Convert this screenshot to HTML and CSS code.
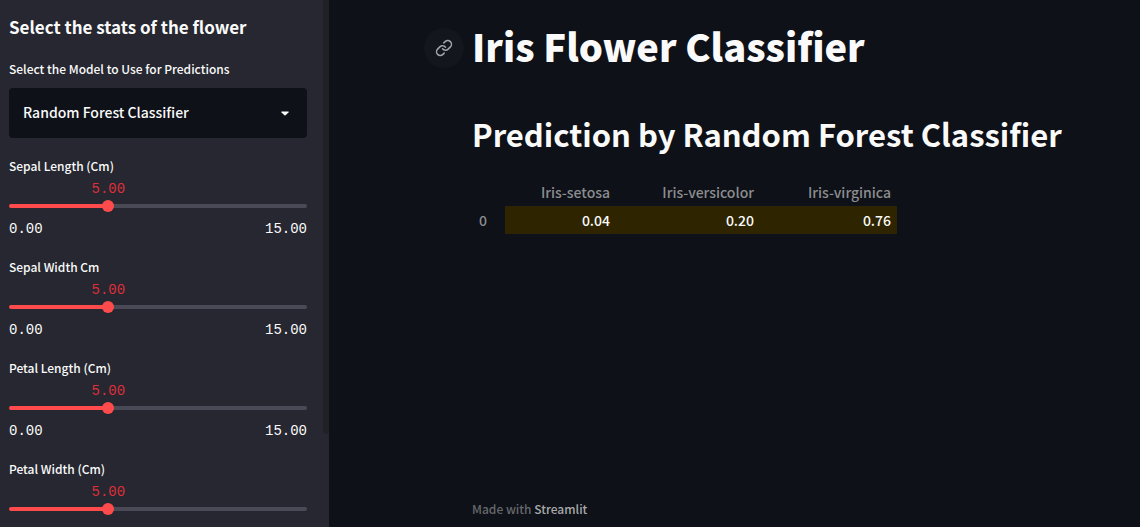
FILE: index.html
```
<!DOCTYPE html>
<html lang="en">
<head>
<meta charset="utf-8">
<meta name="viewport" content="width=device-width, initial-scale=1">
<title>Iris Flower Classifier</title>
<link rel="stylesheet" href="styles.css">
</head>
<body>
<div class="app">
  <aside class="sidebar">
    <h2 class="sidebar-title">Select the stats of the flower</h2>
    <div class="field">
      <label class="label" for="model">Select the Model to Use for Predictions</label>
      <div class="select-wrap">
        <select class="select" id="model">
          <option>Random Forest Classifier</option>
        </select>
        <svg class="caret" viewBox="0 0 8 5" aria-hidden="true"><path d="M0.6 0.5H7.4Q8 0.8 7.5 1.4L4.5 4.2Q4 4.6 3.5 4.2L0.5 1.4Q0 0.8 0.6 0.5Z"/></svg>
      </div>
    </div>
    <div class="slider">
      <label class="label" for="sepal-length">Sepal Length (Cm)</label>
      <output class="value" for="sepal-length">5.00</output>
      <div class="track"><input class="range" id="sepal-length" type="range" min="0" max="15" step="0.01" value="5"></div>
      <div class="limits"><span>0.00</span><span>15.00</span></div>
    </div>
    <div class="slider">
      <label class="label" for="sepal-width">Sepal Width Cm</label>
      <output class="value" for="sepal-width">5.00</output>
      <div class="track"><input class="range" id="sepal-width" type="range" min="0" max="15" step="0.01" value="5"></div>
      <div class="limits"><span>0.00</span><span>15.00</span></div>
    </div>
    <div class="slider">
      <label class="label" for="petal-length">Petal Length (Cm)</label>
      <output class="value" for="petal-length">5.00</output>
      <div class="track"><input class="range" id="petal-length" type="range" min="0" max="15" step="0.01" value="5"></div>
      <div class="limits"><span>0.00</span><span>15.00</span></div>
    </div>
    <div class="slider">
      <label class="label" for="petal-width">Petal Width (Cm)</label>
      <output class="value" for="petal-width">5.00</output>
      <div class="track"><input class="range" id="petal-width" type="range" min="0" max="15" step="0.01" value="5"></div>
    </div>
    <div class="scroll-thumb"></div>
  </aside>
  <main class="main">
    <div class="content">
      <div class="title-row">
        <a class="anchor" href="#iris-flower-classifier" aria-label="Link to this heading">
          <svg class="anchor-icon" viewBox="0 0 24 24" aria-hidden="true"><path d="M10 13a5 5 0 0 0 7.54.54l3-3a5 5 0 0 0-7.07-7.07l-1.72 1.71"/><path d="M14 11a5 5 0 0 0-7.54-.54l-3 3a5 5 0 0 0 7.07 7.07l1.71-1.71"/></svg>
        </a>
        <h1 class="title" id="iris-flower-classifier">Iris Flower Classifier</h1>
      </div>
      <h2 class="subtitle">Prediction by Random Forest Classifier</h2>
      <table class="table">
        <thead>
          <tr><th class="index"></th><th class="setosa" scope="col">Iris-setosa</th><th class="versicolor" scope="col">Iris-versicolor</th><th class="virginica" scope="col">Iris-virginica</th></tr>
        </thead>
        <tbody>
          <tr><th class="index" scope="row">0</th><td>0.04</td><td>0.20</td><td>0.76</td></tr>
        </tbody>
      </table>
    </div>
    <footer class="footer">Made with <a class="footer-link" href="#streamlit">Streamlit</a></footer>
  </main>
</div>
</body>
</html>
```
FILE: styles.css
```
* { box-sizing: border-box; }

body {
  margin: 0;
  background: #0e1117;
  color: #fafafa;
  font-family: "Noto Sans CJK SC", "Open Sans", sans-serif;
  font-size: 14px;
  font-weight: 500;
}

.app {
  display: flex;
  height: 100vh;
  overflow: hidden;
}

.sidebar {
  position: relative;
  flex: 0 0 329px;
  padding: 14px 22px 0 9px;
  overflow: hidden;
  background: #262730;
}

.sidebar-title {
  margin: 0 0 18px;
  font-size: 17px;
  line-height: 26px;
  font-weight: 700;
}

.label {
  display: block;
  font-size: 12px;
  line-height: 22px;
}

.field { margin-bottom: 17px; }

.select-wrap {
  position: relative;
  margin-top: 8px;
}

.select {
  display: block;
  width: 100%;
  height: 50px;
  padding: 0 40px 2px 14px;
  border: 0;
  border-radius: 4px;
  appearance: none;
  background: #0e1117;
  color: #fafafa;
  font-family: inherit;
  font-size: 14px;
  font-weight: inherit;
}

.caret {
  position: absolute;
  top: 23px;
  right: 18px;
  width: 8px;
  height: 5px;
  fill: #fafafa;
  pointer-events: none;
}

.slider {
  display: flex;
  flex-direction: column;
  height: 101px;
}

.value {
  width: 66.66%;
  color: #df2f3a;
  font-family: "Liberation Mono", monospace;
  font-size: 14px;
  font-weight: 400;
  line-height: 24px;
  text-align: center;
}

.track {
  display: flex;
  align-items: center;
  height: 4px;
  margin-top: 3px;
  border-radius: 2px;
  background: linear-gradient(to right, #ff4b4b 33.33%, #494a55 33.33%);
}

.range {
  flex: 1;
  height: 12px;
  margin: 0 -6px;
  appearance: none;
  background: transparent;
}

.range::-webkit-slider-thumb {
  width: 12px;
  height: 12px;
  border-radius: 50%;
  appearance: none;
  background: #ff4b4b;
}

.limits {
  display: flex;
  justify-content: space-between;
  margin-top: 9px;
  font-family: "Liberation Mono", monospace;
  font-size: 14px;
  font-weight: 400;
  line-height: 24px;
}

.scroll-thumb {
  position: absolute;
  top: 0;
  right: 0;
  width: 6px;
  height: 434px;
  border-radius: 0 0 3px 3px;
  background: #212025;
}

.main {
  flex: 1;
  display: flex;
  flex-direction: column;
  justify-content: space-between;
  min-width: 0;
  padding: 18px 48px 8px 95px;
}

.title-row {
  display: flex;
  align-items: center;
  gap: 8px;
}

.anchor {
  display: flex;
  align-items: center;
  justify-content: center;
  width: 40px;
  height: 40px;
  margin-top: 4px;
  border-radius: 50%;
  background: #13161d;
}

.anchor-icon {
  width: 18px;
  height: 18px;
  fill: none;
  stroke: #a3a4a8;
  stroke-width: 2;
  stroke-linecap: round;
  stroke-linejoin: round;
}

.title {
  margin: 0;
  font-size: 38px;
  line-height: 56px;
  font-weight: 900;
}

.subtitle {
  margin: 36px 0 0 48px;
  font-size: 31px;
  line-height: 48px;
  font-weight: 600;
}

.table {
  margin: 20px 0 0 48px;
  border-collapse: collapse;
  font-size: 14px;
  line-height: 28px;
  text-align: right;
}

.table th,
.table td { padding: 0 6px 0 0; }

.table th {
  color: #8c8d91;
  font-weight: 500;
}

.table td {
  background: #2e2500;
}

.table .index {
  width: 33px;
  padding-left: 7px;
  text-align: left;
}

.setosa { width: 111px; }
.versicolor { width: 144px; }
.virginica { width: 137px; }

.footer {
  margin-left: 48px;
  color: #66686c;
  font-size: 12px;
  line-height: 21px;
}

.footer-link {
  color: #a8a9ab;
  text-decoration: none;
}
```
